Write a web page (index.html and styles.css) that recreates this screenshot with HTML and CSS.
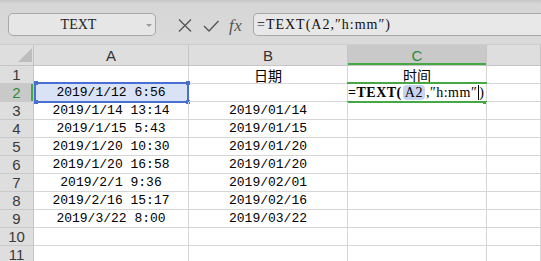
FILE: index.html
```html
<!DOCTYPE html>
<html>
<head>
<meta charset="utf-8">
<link rel="stylesheet" href="styles.css">
</head>
<body>
<div class="toolbar">
  <div class="namebox"><span class="nb-text">TEXT</span><span class="nb-arrow"></span></div>
  <div class="icons">
    <svg class="ic-x" width="14" height="13" viewBox="0 0 14 13"><path d="M1 0.5 L13 12.5 M13 0.5 L1 12.5" stroke="#555" stroke-width="1.3" fill="none"/></svg>
    <svg class="ic-ok" width="16" height="12" viewBox="0 0 16 12"><path d="M1 6 L6 11 L15.5 1" stroke="#555" stroke-width="1.4" fill="none"/></svg>
    <span class="ic-fx">fx</span>
  </div>
  <div class="formula">=TEXT(A2,″h:mm″)</div>
</div>
<div class="sheet">
  <div class="corner"><span class="tri"></span></div>
  <div class="ch">A</div>
  <div class="ch">B</div>
  <div class="ch ch-active">C</div>
  <div class="ch"></div>

  <div class="rh">1</div><div class="c"></div><div class="c cjk">日期</div><div class="c cjk">时间</div><div class="c"></div>

  <div class="rh rh-active">2</div>
  <div class="c ref">2019/1/12 6:56<span class="refbox"><i class="h tl"></i><i class="h tr"></i><i class="h bl"></i><i class="h br"></i></span></div>
  <div class="c"></div>
  <div class="c edit"><span class="b">=TEXT(</span><span class="refhl">A2</span>,″h:mm″<span class="caret"></span>)<span class="editbox"></span><span class="fill"></span></div>
  <div class="c"></div>

  <div class="rh">3</div><div class="c">2019/1/14 13:14</div><div class="c">2019/01/14</div><div class="c"></div><div class="c"></div>
  <div class="rh">4</div><div class="c">2019/1/15 5:43</div><div class="c">2019/01/15</div><div class="c"></div><div class="c"></div>
  <div class="rh">5</div><div class="c">2019/1/20 10:30</div><div class="c">2019/01/20</div><div class="c"></div><div class="c"></div>
  <div class="rh">6</div><div class="c">2019/1/20 16:58</div><div class="c">2019/01/20</div><div class="c"></div><div class="c"></div>
  <div class="rh">7</div><div class="c">2019/2/1 9:36</div><div class="c">2019/02/01</div><div class="c"></div><div class="c"></div>
  <div class="rh">8</div><div class="c">2019/2/16 15:17</div><div class="c">2019/02/16</div><div class="c"></div><div class="c"></div>
  <div class="rh">9</div><div class="c">2019/3/22 8:00</div><div class="c">2019/03/22</div><div class="c"></div><div class="c"></div>
  <div class="rh">10</div><div class="c"></div><div class="c"></div><div class="c"></div><div class="c"></div>
  <div class="rh">11</div><div class="c"></div><div class="c"></div><div class="c"></div><div class="c"></div>
</div>
</body>
</html>
```
FILE: styles.css
```css
html, body {
  margin: 0;
  padding: 0;
}
body {
  width: 541px;
  height: 261px;
  overflow: hidden;
  background: #fff;
}
.toolbar {
  height: 45px;
  box-sizing: border-box;
  background: linear-gradient(#c6c6c6 0, #d6d6d6 4px, #dadada 100%);
  border-bottom: 1px solid #cdcdcd;
  display: flex;
  align-items: flex-start;
  padding: 13px 0 0 8px;
}
.namebox {
  width: 148px;
  height: 23px;
  box-sizing: border-box;
  border: 1px solid #a8a8a8;
  border-radius: 5px;
  background: #e6e6e6;
  display: flex;
  align-items: center;
}
.nb-text {
  flex: 1;
  text-align: center;
  font-family: "Liberation Serif", serif;
  font-size: 14px;
  color: #222;
  padding-left: 2px;
}
.nb-arrow {
  width: 0;
  height: 0;
  border-left: 3px solid transparent;
  border-right: 3px solid transparent;
  border-top: 3px solid #9a9a9a;
  margin-right: 3px;
  margin-top: 2px;
}
.icons {
  display: flex;
  align-items: center;
  margin-left: 22px;
  margin-top: 6px;
  height: 13px;
}
.ic-x { margin-right: 11px; }
.ic-ok { margin-right: 10px; }
.ic-fx {
  font-family: "Liberation Serif", serif;
  font-style: italic;
  font-size: 17px;
  color: #555;
  width: 16px;
  line-height: 13px;
  letter-spacing: 0.5px;
}
.formula {
  flex: 1;
  margin-left: 8px;
  height: 23px;
  box-sizing: border-box;
  border: 1px solid #a8a8a8;
  border-right: none;
  border-radius: 5px 0 0 5px;
  background: #e8e8e8;
  font-family: "Liberation Serif", serif;
  font-size: 14px;
  letter-spacing: 1px;
  line-height: 21px;
  padding-left: 3px;
  color: #111;
  white-space: nowrap;
}
.sheet {
  display: grid;
  grid-template-columns: 34px 155px 159px 139px 1fr;
  grid-template-rows: 21px repeat(11, 18px);
}
.sheet > div {
  box-sizing: border-box;
  border-right: 1px solid #d6d6d6;
  border-bottom: 1px solid #d6d6d6;
}
.corner {
  background: #dedede;
  border-color: #c4c4c4 !important;
  display: flex;
  align-items: flex-end;
  justify-content: flex-end;
  padding: 0 1px 3px 0;
}
.tri {
  width: 14px;
  height: 14px;
  background: #bdbdbd;
  clip-path: polygon(100% 0, 100% 100%, 0 100%);
}
.ch {
  background: #dedede;
  border-right-color: #c6c6c6 !important;
  border-bottom-color: #c6c6c6 !important;
  font-family: "Liberation Sans", sans-serif;
  font-size: 15px;
  color: #333;
  text-align: center;
  line-height: 21px;
}
.ch-active {
  background: #c9c9c9;
  color: #2e8c3a;
  box-shadow: inset 0 -2px #45a845;
}
.rh {
  background: #dedede;
  border-right-color: #c6c6c6 !important;
  border-bottom-color: #cacaca !important;
  font-family: "Liberation Sans", sans-serif;
  font-size: 15px;
  color: #3a3a3a;
  text-align: center;
  line-height: 17px;
}
.rh-active {
  background: #c9c9c9;
  color: #2e8c3a;
  box-shadow: inset -2px 0 #45a845;
}
.c {
  font-family: "Liberation Mono", "DejaVu Sans Mono", monospace;
  font-size: 13px;
  color: #000;
  text-align: center;
  line-height: 18px;
  white-space: nowrap;
  position: relative;
}
.cjk {
  font-family: "Noto Sans CJK SC", sans-serif;
  font-size: 14px;
  line-height: 18px;
}
.ref {
  background: #dae2f5;
}
.refbox {
  position: absolute;
  left: 0;
  right: -1px;
  top: -2px;
  bottom: -2px;
  border: 2px solid #4a6fd3;
}
.h {
  position: absolute;
  width: 4px;
  height: 4px;
  background: #4a6fd3;
}
.tl { left: -2px; top: -3px; }
.tr { right: -3px; top: -3px; }
.bl { left: -2px; bottom: -3px; }
.br { right: -3px; bottom: -3px; }
.edit {
  text-align: left;
  overflow: visible;
  font-family: "Liberation Serif", serif;
  font-size: 14px;
  letter-spacing: 0.5px;
  line-height: 17px;
}
.b {
  font-weight: bold;
}
.refhl {
  background: #c7d3ef;
  border-radius: 4px;
  padding: 0 2px;
  margin: 0 1px;
}
.caret {
  display: inline-block;
  width: 1px;
  height: 15px;
  background: #000;
  vertical-align: -3px;
  margin-left: 1px;
}
.editbox {
  position: absolute;
  left: -1px;
  right: -1px;
  top: -2px;
  bottom: -2px;
  border-top: 2px solid #45a845;
  border-bottom: 2px solid #45a845;
}
.fill {
  position: absolute;
  right: -1px;
  bottom: -3px;
  width: 4px;
  height: 3px;
  background: #45a845;
}
```
